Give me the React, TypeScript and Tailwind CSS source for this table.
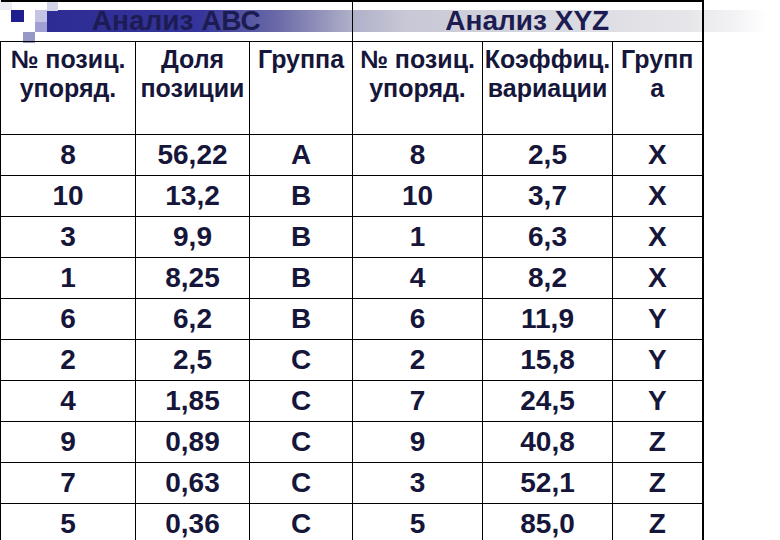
const ROWS = [
  ["8", "56,22", "A", "8", "2,5", "X"],
  ["10", "13,2", "B", "10", "3,7", "X"],
  ["3", "9,9", "B", "1", "6,3", "X"],
  ["1", "8,25", "B", "4", "8,2", "X"],
  ["6", "6,2", "B", "6", "11,9", "Y"],
  ["2", "2,5", "C", "2", "15,8", "Y"],
  ["4", "1,85", "C", "7", "24,5", "Y"],
  ["9", "0,89", "C", "9", "40,8", "Z"],
  ["7", "0,63", "C", "3", "52,1", "Z"],
  ["5", "0,36", "C", "5", "85,0", "Z"],
];

const HEADS = [
  ["№ позиц.", "упоряд."],
  ["Доля", "позиции"],
  ["Группа"],
  ["№ позиц.", "упоряд."],
  ["Коэффиц.", "вариации"],
  ["Групп", "а"],
];

// slide template decoration: squares + gradient band behind the title row
function TitleDecor() {
  return (
    <svg className="absolute left-0 top-0" width="780" height="44" viewBox="0 0 780 44">
      <defs>
        <linearGradient id="band" x1="47" x2="767" y1="0" y2="0" gradientUnits="userSpaceOnUse">
          <stop offset="0" stopColor="#2c2c94" />
          <stop offset="0.21" stopColor="#34349a" />
          <stop offset="0.32" stopColor="#6a6aa8" />
          <stop offset="0.42" stopColor="#aeaec8" />
          <stop offset="0.5" stopColor="#c8c8d6" />
          <stop offset="0.7" stopColor="#d8d8e0" />
          <stop offset="0.89" stopColor="#e6e6ea" />
          <stop offset="0.96" stopColor="#f4f4f6" />
          <stop offset="1" stopColor="#ffffff" />
        </linearGradient>
      </defs>
      <rect x="47" y="10" width="720" height="22" fill="url(#band)" />
      <rect x="0" y="0" width="12" height="10" fill="#ececf2" />
      <rect x="11" y="10" width="13" height="12" fill="#1e1e8e" />
      <rect x="35" y="10" width="12" height="12" fill="#c4c4e2" />
      <rect x="47" y="0" width="11" height="11" fill="#d4d4e8" />
      <rect x="35" y="22" width="12" height="10" fill="#a0a0d2" />
      <rect x="23" y="32" width="12" height="11" fill="#9898c6" />
    </svg>
  );
}

export default function App() {
  const cell = "border border-black text-center align-middle p-0";
  return (
    <div className="relative h-[540px] w-[780px] overflow-hidden bg-white font-['Liberation_Sans',Arial,sans-serif] font-bold text-[#16163a]">
      <TitleDecor />
      <table className="relative table-fixed border-collapse border-t-2 border-t-black border-r-2 border-r-black">
        <colgroup>
          <col className="w-[135px]" />
          <col className="w-[114px]" />
          <col className="w-[103px]" />
          <col className="w-[130px]" />
          <col className="w-[130px]" />
          <col className="w-[90px]" />
        </colgroup>
        <thead>
          <tr className="h-[40px]">
            <th colSpan={3} className="border-r border-b border-black p-0 pb-[1px] text-center align-middle text-[28px] leading-none text-[#1c1c52]">
              Анализ АВС
            </th>
            <th colSpan={3} className="border-b border-black p-0 pb-[1px] text-center align-middle text-[28px] leading-none text-[#1c1c52]">
              Анализ XYZ
            </th>
          </tr>
          <tr className="h-[93px] text-[25px] leading-[29px]">
            {HEADS.map((h, i) => (
              <th key={i} className={`${cell} align-top pt-[3px] font-bold`}>
                {h.map((line, k) => (
                  <div key={k}>{line}</div>
                ))}
              </th>
            ))}
          </tr>
        </thead>
        <tbody className="text-[28px] leading-none">
          {ROWS.map((r, i) => (
            <tr key={i} className="h-[41px]">
              {r.map((v, j) => (
                <td key={j} className={cell}>
                  {v}
                </td>
              ))}
            </tr>
          ))}
        </tbody>
      </table>
    </div>
  );
}
